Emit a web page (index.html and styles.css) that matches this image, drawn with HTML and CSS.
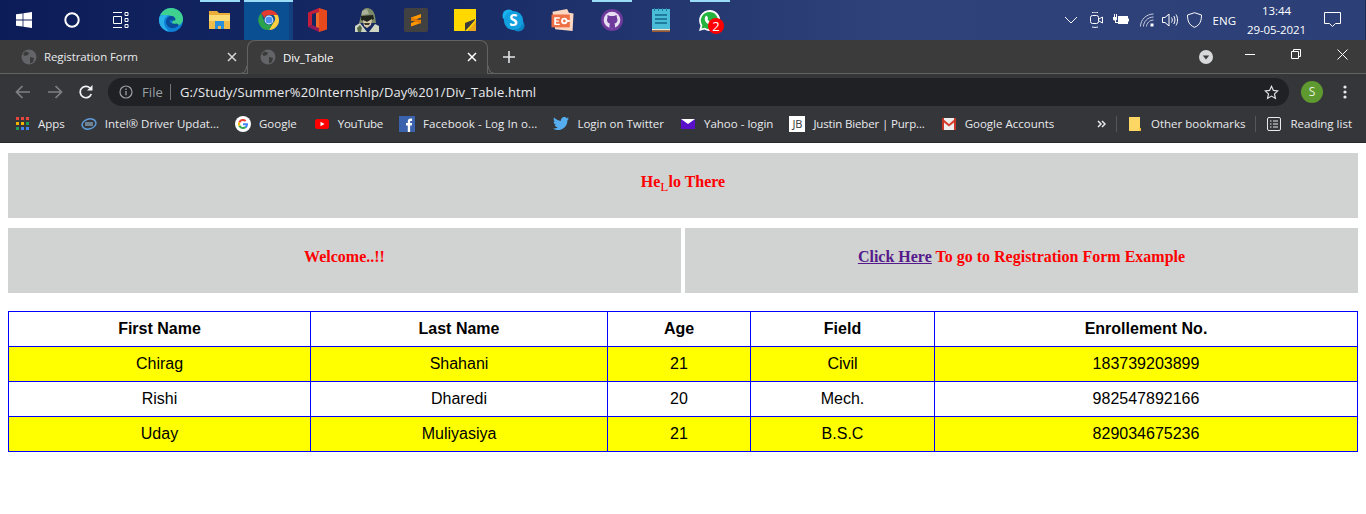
FILE: index.html
```html
<!DOCTYPE html>
<html lang="en">
  <head>
    <meta charset="UTF-8" />
    <title>Div_Table</title>
    <link rel="stylesheet" href="styles.css">
  </head>
  <body>
    <!-- Windows taskbar -->
    <div class="taskbar">
      <div class="task-start">
        <svg width="16" height="16" viewBox="0 0 16 16"><path fill="#fff" d="M0 2.300l6.600-.9v6.200H0zM7.400 1.300L16 0v7.600H7.400zM0 8.400h6.600v6.200L0 13.700zM7.400 8.400H16V16l-8.600-1.300z"/></svg>
      </div>
      <div class="task-cortana">
        <svg width="16" height="16" viewBox="0 0 16 16"><circle cx="8" cy="8" r="6.700" fill="none" stroke="#fff" stroke-width="2"/></svg>
      </div>
      <div class="task-view">
        <svg width="17" height="16" viewBox="0 0 17 16" fill="none" stroke="#fff"><path d="M1 .5h9M1 15.500h9M1.500 4.500h8v7h-8zM13 .5h3v3h-3zM13 6.500h3v3h-3zM13 12.500h3v3h-3z"/></svg>
      </div>
      <div class="task-apps">
        <div class="app">
          <svg width="24" height="24" viewBox="0 0 24 24"><circle cx="12" cy="12" r="12" fill="#0f7fd6"/><path fill="#3fd18f" d="M1 8C3 3 7 0 12 0c7 0 12 5 12 11 0 4-3 6.500-6 6.500-2.500 0-4.500-1-5-3 2-2 2-6-2-7-4-1-8-.5-10 .5z"/><path fill="#0a4c9c" d="M7 14c0-4 3-6.500 6-6 3 .5 4 3 3 4.500h-5.500c.3 2.500 3.500 4 7.500 3l2 1.500c-3 3.500-7 4-9.500 2.500C8.500 18.500 7 16.500 7 14z"/><path fill="#2ab0e8" d="M1 8c2-1 6-1.500 9-.5-2.500.5-5 3-5 7 0 3 2 6 5 9C4 22.500 0 17.500 0 12c0-1.500.4-3 1-4z"/></svg>
        </div>
        <div class="app app-running">
          <svg width="21" height="18" viewBox="0 0 21 18"><path fill="#e8ad3a" d="M0 0h8l2 2h11v16H0z"/><path fill="#fbdc74" d="M0 4h21v14H0z"/><path fill="#f0bd4a" d="M0 10h21v8H0z"/><path fill="#2a8fdc" d="M6 10h9v8h-3v-3H9v3H6z"/></svg>
        </div>
        <div class="app app-active">
          <svg width="22" height="22" viewBox="0 0 24 24"><path fill="#e33b2e" d="M12 1a11 11 0 0 1 9.500 5.500H12a5.500 5.500 0 0 0-5 3.200L3.400 4.400A11 11 0 0 1 12 1z"/><path fill="#ffcd40" d="M21.500 6.500A11 11 0 0 1 12 23l4.600-8a5.500 5.500 0 0 0 .2-8.500z"/><path fill="#2ba24c" d="M3.400 4.400L7.300 14.800A5.500 5.500 0 0 0 16.600 15L12 23A11 11 0 0 1 3.400 4.400z"/><circle cx="12" cy="12" r="4.800" fill="#fff"/><circle cx="12" cy="12" r="3.900" fill="#4a8ef0"/></svg>
        </div>
        <div class="app">
          <svg width="19" height="24" viewBox="0 0 19 24"><path fill="#e8491c" d="M11 0l8 2.500v19L11 24V0z"/><path fill="#c41e3a" d="M11 0v4L4 6v11l-4 2V4.500z"/><path fill="#8e1a5c" d="M0 19l4-2 7 3v4z"/><path fill="#f06a2a" d="M11 4v16l-3-1V5z"/></svg>
        </div>
        <div class="app">
          <svg width="24" height="24" viewBox="0 0 24 24"><path fill="#7c8a68" d="M6 8c0-5 3-8 6-8s7 2 8 8l1 7H4z"/><path fill="#aab39a" d="M7 3l5-2 2 5-7 1z"/><path fill="#1f241c" d="M6 8l12-1 1 4-7 3-6-2z"/><path fill="#d8c8a8" d="M8 12l4 2 5-3-1 6-4 3-3-2z"/><path fill="#3a3a2c" d="M9 15h6l-1 2h-4z"/><path fill="#cfd6c4" d="M0 24v-6l5-3 4 5 3 4zM24 24v-6l-4-2-3 4-3 4z"/><path fill="#55684a" d="M2 20l3-3 2 3-1 4H3z"/></svg>
        </div>
        <div class="app">
          <svg width="24" height="24" viewBox="0 0 24 24"><rect width="24" height="24" rx="2" fill="#414141"/><path fill="#ff9800" d="M7 9.500L17 6v3.500L7 13zM7 14.500L17 11v0zM7 15l10-3.500V15L7 18.500z"/><path fill="#e57a00" d="M7 9.500L17 12.500v3L7 12.500z"/></svg>
        </div>
        <div class="app">
          <svg width="22" height="22" viewBox="0 0 22 22"><path fill="#ffd800" d="M0 0h22v14l-8 8H0z"/><path fill="#eba91a" d="M22 12v10H14z"/><path fill="#3c3c3c" d="M11 22V14l10-4v1l-6 7z"/></svg>
        </div>
        <div class="app">
          <svg width="23" height="23" viewBox="0 0 24 24"><circle cx="7" cy="7" r="6.500" fill="#18b4f0"/><circle cx="17" cy="17" r="6.500" fill="#0c86c7"/><circle cx="12" cy="12" r="10" fill="#12a0e0"/><text class="skype-s" x="12" y="17.500" text-anchor="middle">S</text></svg>
        </div>
        <div class="app">
          <svg width="23" height="22" viewBox="0 0 24 24"><path fill="#fbd7c2" d="M1 3l16-3 2 4 5 1-1 19-19-2z"/><path fill="#ee7044" d="M0 6h20v14H0z"/><path fill="#fff" d="M3 9h6v1.500H5v2h3V14H5v2h4v1.500H3z"/><circle cx="14" cy="13" r="3.500" fill="#fff"/><circle cx="14" cy="13" r="1.500" fill="#ee7044"/><path fill="#fff" d="M17 12h3v2h-3z"/></svg>
        </div>
        <div class="app app-running">
          <svg width="22" height="22" viewBox="0 0 22 22"><circle cx="11" cy="11" r="11" fill="#6e3a9c"/><circle cx="11" cy="11" r="8.300" fill="#e9dff2"/><path fill="#6e3a9c" d="M6.500 6l2.500 1h4l2.500-1 .5 3c1 2 .5 5-2.500 5.500l.5 1.500V19H8.500v-3L9 14.500C6 14 5.500 11 6.500 9z"/></svg>
        </div>
        <div class="app">
          <svg width="18" height="24" viewBox="0 0 18 24"><path fill="#4bbcd8" d="M0 1h18v20H0z"/><path fill="#1e7d9c" d="M3 6h12v2H3zM3 10h12v2H3zM3 14h12v2H3zM2 0h1v3H2zM6 0h1v3H6zM10 0h1v3h-1zM14 0h1v3h-1z"/><path fill="#f3e6d0" d="M0 21h18v1.500H0z"/><path fill="#9a5a2c" d="M0 22.500h18V24H0z"/></svg>
        </div>
        <div class="app app-running">
          <svg width="21" height="21" viewBox="0 0 22 22"><path fill="#fff" d="M11 0a11 11 0 0 0-9.400 16.500L0 22l5.700-1.500A11 11 0 1 0 11 0z"/><path fill="#27b43e" d="M11 2a9 9 0 0 0-7.500 14L2.700 19.300 6 18.500A9 9 0 1 0 11 2z"/><path fill="#fff" d="M7.500 6c1-.6 1.500 1.500 2 2.500L9 10c.7 1.200 1.700 2.200 3 3l1.500-.7 2.400 1.400c0 2-2.500 2.500-4 2C8.500 15 6.200 12.300 6 9.500 6 8 6.700 6.500 7.500 6z"/></svg>
          <span class="badge">2</span>
        </div>
      </div>
      <div class="tray">
        <svg class="tray-chevron" width="14" height="8" viewBox="0 0 14 8"><path d="M1 1l6 6 6-6" fill="none" stroke="#fff"/></svg>
        <svg class="tray-meet" width="13" height="16" viewBox="0 0 13 16" fill="none" stroke="#fff"><rect x=".5" y="3.500" width="8" height="8" rx="2"/><path d="M9 7l3.500-2v6L9 9M2 .5c2-.5 4-.5 6 0M2 15c2 .5 4 .5 6 0"/></svg>
        <svg class="tray-power" width="16" height="12" viewBox="0 0 16 12"><path fill="#fff" d="M5 2h10v8H5zM15 4.500h1v3h-1zM0 3h4v2.500l-1 1H1l-1-1zM1 0h1v3H1zM3 0h1v3H3zM2 6h1v2h2v1H2z"/></svg>
        <svg class="tray-wifi" width="14" height="14" viewBox="0 0 14 14" fill="none" stroke="#c8cede"><path d="M.5 13.500C.5 7 6 1 13.500 1M3.500 13.500c0-4.500 4-9.500 10-9.500M6.500 13.500c0-3 3-6.500 7-6.500"/><rect x="10.500" y="10.500" width="3" height="3" fill="#fff" stroke="none"/></svg>
        <svg class="tray-sound" width="16" height="14" viewBox="0 0 16 14" fill="none" stroke="#fff"><path d="M.5 4.500h2.500L7 1v12L3 9.500H.5zM9.500 4.500c1 1.500 1 3.500 0 5M11.800 3c1.500 2.500 1.500 5.500 0 8M14 1.500c2 3 2 8 0 11"/></svg>
        <svg class="tray-shield" width="15" height="16" viewBox="0 0 15 16"><path d="M7.500.7l7 2.300c0 5-1 10-7 12.300C1.500 13 .5 8 .5 3z" fill="none" stroke="#fff"/></svg>
        <span class="tray-lang">ENG</span>
        <div class="clock"><span>13:44</span><span>29-05-2021</span></div>
        <svg class="tray-notify" width="17" height="16" viewBox="0 0 17 16"><path d="M.5.500h16v11h-5l-3 3-3-3h-5z" fill="none" stroke="#fff"/></svg>
      </div>
    </div>

    <!-- browser tabs -->
    <div class="tabstrip">
      <div class="tab">
        <svg class="globe" width="16" height="16" viewBox="0 0 16 16"><circle cx="8" cy="8" r="7.500" fill="#636468"/><path fill="#3b3b3b" d="M4 2.500l4 1-1 2.500-3 1-2-1.500zM9 8l4 1-1 4-3 1.500z"/></svg>
        <span class="tab-title">Registration Form</span>
        <svg class="tab-close" width="10" height="10" viewBox="0 0 10 10"><path d="M1 1l8 8M9 1L1 9" stroke="#d7d8da" stroke-width="1.500"/></svg>
      </div>
      <div class="tab tab-active">
        <svg class="globe" width="16" height="16" viewBox="0 0 16 16"><circle cx="8" cy="8" r="7.500" fill="#636468"/><path fill="#3b3b3b" d="M4 2.500l4 1-1 2.500-3 1-2-1.500zM9 8l4 1-1 4-3 1.500z"/></svg>
        <span class="tab-title">Div_Table</span>
        <svg class="tab-close" width="10" height="10" viewBox="0 0 10 10"><path d="M1 1l8 8M9 1L1 9" stroke="#fff" stroke-width="1.500"/></svg>
      </div>
      <svg class="tab-new" width="12" height="12" viewBox="0 0 12 12"><path d="M6 0v12M0 6h12" stroke="#e4e5e7" stroke-width="1.600"/></svg>
      <div class="tab-fill">
        <svg class="tab-search" width="14" height="14" viewBox="0 0 14 14"><circle cx="7" cy="7" r="7" fill="#d8d9db"/><path d="M3.800 5.500h6.400L7 9.500z" fill="#3b3b3b"/></svg>
        <svg class="win-min" width="10" height="1" viewBox="0 0 10 1"><path d="M0 .5h10" stroke="#fff"/></svg>
        <svg class="win-max" width="10" height="10" viewBox="0 0 10 10" fill="none" stroke="#fff"><path d="M.5 2.500h7v7h-7zM2.500 2.500v-2h7v7h-2"/></svg>
        <svg class="win-close" width="11" height="11" viewBox="0 0 11 11"><path d="M.5.500l10 10M10.500.500l-10 10" stroke="#fff"/></svg>
      </div>
    </div>

    <!-- address bar -->
    <div class="toolbar">
      <svg class="nav-back" width="16" height="14" viewBox="0 0 16 14" fill="none" stroke="#7e8084" stroke-width="1.700"><path d="M15 7H2M7.500 1L1.500 7l6 6"/></svg>
      <svg class="nav-forward" width="16" height="14" viewBox="0 0 16 14" fill="none" stroke="#7e8084" stroke-width="1.700"><path d="M1 7h13M8.500 1l6 6-6 6"/></svg>
      <svg class="nav-reload" width="14" height="14" viewBox="0 0 14 14" fill="none" stroke="#f1f3f4" stroke-width="1.700"><path d="M12.300 9A5.700 5.700 0 1 1 11 3"/><path d="M13.500 0v5.500H8z" fill="#f1f3f4" stroke="none"/></svg>
      <div class="omnibox">
        <svg class="info" width="14" height="14" viewBox="0 0 14 14"><circle cx="7" cy="7" r="6" fill="none" stroke="#9aa0a6" stroke-width="1.200"/><path d="M7 6v4.200M7 3.600v1.400" stroke="#9aa0a6" stroke-width="1.300"/></svg>
        <span class="scheme">File</span>
        <span class="url">G:/Study/Summer%20Internship/Day%201/Div_Table.html</span>
        <svg class="star" width="15" height="15" viewBox="0 0 15 15"><path d="M7.500 1.300l1.900 4.100 4.400.5-3.300 3 .9 4.500-3.900-2.300-3.900 2.300.9-4.500-3.300-3 4.400-.5z" fill="none" stroke="#dfe1e5" stroke-width="1.200"/></svg>
      </div>
      <span class="avatar">S</span>
      <svg class="menu" width="4" height="14" viewBox="0 0 4 14"><circle cx="2" cy="2" r="1.600" fill="#e8eaed"/><circle cx="2" cy="7" r="1.600" fill="#e8eaed"/><circle cx="2" cy="12" r="1.600" fill="#e8eaed"/></svg>
    </div>

    <!-- bookmarks -->
    <div class="bookmarks">
      <a class="bm">
        <i class="bm-icon"><svg width="13" height="13" viewBox="0 0 13 13"><path fill="#e8453c" d="M0 0h3v3H0zM5 0h3v3H5zM10 0h3v3h-3z"/><path fill="#f4b400" d="M0 5h3v3H0zM5 5h3v3H5z"/><path fill="#1a9c5a" d="M10 5h3v3h-3zM0 10h3v3H0z"/><path fill="#4285f4" d="M5 10h3v3H5zM10 10h3v3h-3z"/></svg></i>
        <span>Apps</span>
      </a>
      <a class="bm">
        <i class="bm-icon"><svg width="16" height="14" viewBox="0 0 16 14"><ellipse cx="8" cy="7" rx="7" ry="5" fill="none" stroke="#5d9cd8" stroke-width="1.500" transform="rotate(-15 8 7)"/><path d="M4 8h8M4 6h8" stroke="#a9cdec"/></svg></i>
        <span>Intel® Driver Updat...</span>
      </a>
      <a class="bm">
        <i class="bm-icon"><svg width="16" height="16" viewBox="0 0 16 16"><circle cx="8" cy="8" r="8" fill="#fff"/><path fill="#4285f4" d="M13 8.200c0-.4 0-.7-.1-1H8v2h2.800c-.1.600-.5 1.200-1 1.500l1.600 1.200c1-.9 1.600-2.200 1.600-3.700z"/><path fill="#34a853" d="M8 13c1.400 0 2.500-.4 3.400-1.200l-1.600-1.200c-.5.300-1 .5-1.800.5-1.300 0-2.400-.9-2.800-2.100l-1.700 1.300C4.300 11.900 6 13 8 13z"/><path fill="#fbbc05" d="M5.200 9c-.2-.7-.2-1.300 0-2L3.500 5.700a5 5 0 0 0 0 4.600z"/><path fill="#ea4335" d="M8 5c.8 0 1.400.3 1.900.8l1.500-1.400A5 5 0 0 0 3.500 5.700L5.200 7C5.600 5.800 6.700 5 8 5z"/></svg></i>
        <span>Google</span>
      </a>
      <a class="bm bm-youtube">
        <i class="bm-icon"><svg width="14" height="10" viewBox="0 0 14 10"><rect width="14" height="10" rx="2.500" fill="#f00"/><path d="M5.500 2.800L9.500 5l-4 2.200z" fill="#fff"/></svg></i>
        <span>YouTube</span>
      </a>
      <a class="bm bm-facebook">
        <i class="bm-icon"><svg width="16" height="16" viewBox="0 0 16 16"><rect width="16" height="16" fill="#3b62ad"/><path fill="#fff" d="M8.800 16V9.500H7V7h1.800V5.300C8.800 3.500 10 2.600 11.500 2.600h1.600V5h-1c-.8 0-1 .4-1 1V7h2l-.3 2.500h-1.700V16z"/></svg></i>
        <span>Facebook - Log In o...</span>
      </a>
      <a class="bm">
        <i class="bm-icon"><svg width="16" height="13" viewBox="0 0 16 13"><path fill="#55acee" d="M16 1.500c-.6.300-1.200.4-1.900.5.700-.4 1.200-1 1.400-1.800-.6.400-1.300.6-2 .8A3.300 3.300 0 0 0 7.900 4C5.200 3.800 2.800 2.500 1.100.6c-.9 1.500-.4 3.400 1 4.400-.5 0-1-.2-1.500-.4 0 1.600 1.100 3 2.600 3.300-.5.100-1 .1-1.500 0 .4 1.300 1.600 2.200 3.100 2.300A6.600 6.600 0 0 1 0 11.500 9.300 9.300 0 0 0 14.400 3.300c.6-.5 1.200-1.100 1.600-1.800z"/></svg></i>
        <span>Login on Twitter</span>
      </a>
      <a class="bm">
        <i class="bm-icon"><svg width="14" height="10" viewBox="0 0 14 10"><rect width="14" height="10" fill="#5a10c9"/><path d="M0 0l7 5 7-5z" fill="#fff"/></svg></i>
        <span>Yahoo - login</span>
      </a>
      <a class="bm bm-justin">
        <i class="bm-icon jb-icon">JB</i>
        <span>Justin Bieber | Purp...</span>
      </a>
      <a class="bm">
        <i class="bm-icon"><svg width="14" height="12" viewBox="0 0 14 12"><rect width="14" height="12" fill="#eee"/><path d="M0 0l7 6 7-6v3L7 8.500 0 3z" fill="#d9402f"/><path d="M0 0h2v12H0zM12 0h2v12h-2z" fill="#c33527"/></svg></i>
        <span>Google Accounts</span>
      </a>
      <div class="bm-right">
        <svg class="bm-more" width="9" height="8" viewBox="0 0 9 8" fill="none" stroke="#e8eaed" stroke-width="1.500"><path d="M1 1l3 3-3 3M5 1l3 3-3 3"/></svg>
        <i class="bm-sep"></i>
        <a class="bm">
          <i class="bm-icon"><svg width="12" height="14" viewBox="0 0 12 14"><path fill="#fdd663" d="M0 0h11v11l1 3H0z"/><path fill="#f5c33b" d="M10 11h2v3h-2z"/></svg></i>
          <span>Other bookmarks</span>
        </a>
        <i class="bm-sep"></i>
        <a class="bm">
          <i class="bm-icon"><svg width="14" height="14" viewBox="0 0 14 14" fill="none" stroke="#e8eaed"><rect x=".5" y=".5" width="13" height="13" rx="1.500"/><path d="M3 4h1.500M6 4h5M3 7h1.500M6 7h5M3 10h1.500M6 10h5"/></svg></i>
          <span>Reading list</span>
        </a>
      </div>
    </div>

    <!-- page content -->
    <div class="page">
      <div class="banner"><span>He<sub>L</sub>lo There</span></div>
      <div class="banner-row">
        <div class="banner"><span>Welcome..!!</span></div>
        <div class="banner"><span><a class="link" href="#">Click Here</a> To go to Registration Form Example</span></div>
      </div>
      <table>
        <colgroup>
          <col class="col-first" />
          <col class="col-last" />
          <col class="col-age" />
          <col class="col-field" />
          <col />
        </colgroup>
        <tr><th>First Name</th><th>Last Name</th><th>Age</th><th>Field</th><th>Enrollement No.</th></tr>
        <tr><td>Chirag</td><td>Shahani</td><td>21</td><td>Civil</td><td>183739203899</td></tr>
        <tr><td>Rishi</td><td>Dharedi</td><td>20</td><td>Mech.</td><td>982547892166</td></tr>
        <tr><td>Uday</td><td>Muliyasiya</td><td>21</td><td>B.S.C</td><td>829034675236</td></tr>
      </table>
    </div>
  </body>
</html>
```

FILE: styles.css
```css
html,
body {
  margin: 0;
  padding: 0;
  background-color: #fff;
  overflow: hidden;
}

body {
  font-family: "Open Sans", "Noto Sans", sans-serif;
}

svg {
  display: block;
  flex-shrink: 0;
}

/* taskbar */
.taskbar {
  height: 40px;
  display: flex;
  align-items: center;
  background: linear-gradient(90deg, #0b1c58 0%, #1a2c66 35%, #2f4279 65%, #2c3f76 100%);
  color: #fff;
  border-right: 1px solid #1c2a55;
  box-sizing: border-box;
}

.task-start {
  margin-left: 16px;
}

.task-cortana {
  margin-left: 32px;
}

.task-view {
  margin-left: 32px;
}

.task-apps {
  display: flex;
  margin-left: 17px;
}

.app {
  width: 49px;
  height: 40px;
  display: flex;
  align-items: center;
  justify-content: center;
  position: relative;
}

.app-running::before {
  content: "";
  position: absolute;
  top: 0;
  left: 5px;
  width: 40px;
  height: 2px;
  background-color: #98dcf7;
}

.app-active {
  background: linear-gradient(90deg, #0b4f93 0 45px, #123f80 45px);
}

.app-active::before {
  content: "";
  position: absolute;
  top: 0;
  left: 0;
  width: 100%;
  height: 2px;
  background-color: #98dcf7;
}

.skype-s {
  font-size: 16px;
  font-weight: 700;
  fill: #fff;
}

.badge {
  position: absolute;
  right: 10px;
  bottom: 6px;
  width: 16px;
  height: 16px;
  border-radius: 50%;
  background-color: #f00;
  color: #fff;
  font-size: 13px;
  line-height: 16px;
  text-align: center;
}

.tray {
  margin-left: auto;
  display: flex;
  align-items: center;
}

.tray-meet {
  margin-left: 12px;
}

.tray-power {
  margin-left: 10px;
}

.tray-wifi {
  margin-left: 11px;
}

.tray-sound {
  margin-left: 8px;
}

.tray-shield {
  margin-left: 9px;
}

.tray-lang {
  margin-left: 11px;
  font-size: 11.5px;
}

.clock {
  margin-left: 12px;
  width: 57px;
  display: flex;
  flex-direction: column;
  align-items: center;
  font-size: 11.5px;
  letter-spacing: -0.1px;
  line-height: 19px;
  white-space: nowrap;
}

.tray-notify {
  margin-left: 19px;
  margin-right: 24px;
}

/* tabs */
.tabstrip {
  height: 34px;
  display: flex;
  align-items: center;
  background-color: #3b3b3b;
  box-shadow: inset 0 -1px 0 #626262;
  color: #e8eaed;
  font-size: 11.5px;
  letter-spacing: -0.1px;
}

.tab {
  width: 247px;
  height: 34px;
  display: flex;
  align-items: center;
  box-sizing: border-box;
  padding: 0 10px 1px 21px;
  flex-shrink: 0;
}

.tab-active {
  width: 241px;
  padding-left: 12px;
  border: 1px solid #626262;
  border-bottom: 0;
  border-radius: 8px 8px 0 0;
  background-color: #3b3b3b;
  color: #fff;
  position: relative;
}

.tab-active::before,
.tab-active::after {
  content: "";
  position: absolute;
  bottom: 0;
  width: 7px;
  height: 7px;
  background-color: #3b3b3b;
  border-bottom: 1px solid #626262;
}

.tab-active::before {
  left: -9px;
  border-right: 1px solid #626262;
  border-radius: 0 0 7px 0;
}

.tab-active::after {
  right: -9px;
  border-left: 1px solid #626262;
  border-radius: 0 0 0 7px;
}

.globe {
  margin-right: 7px;
}

.tab-title {
  flex: 1;
}

.tab-new {
  margin-left: 15px;
}

.tab-fill {
  flex: 1;
  display: flex;
  align-items: center;
  height: 100%;
}

.tab-search {
  margin-left: auto;
}

.win-min {
  margin-left: 32px;
  margin-bottom: 6px;
}

.win-max {
  margin-left: 36px;
  margin-bottom: 6px;
}

.win-close {
  margin-left: 36px;
  margin-right: 18px;
  margin-bottom: 6px;
}

/* address bar */
.toolbar {
  height: 36px;
  display: flex;
  align-items: center;
  background-color: #35363a;
}

.nav-back {
  margin-left: 15px;
}

.nav-forward {
  margin-left: 16px;
}

.nav-reload {
  margin-left: 16px;
}

.omnibox {
  width: 1181px;
  margin-left: 15px;
  height: 28px;
  border-radius: 14px;
  background-color: #202124;
  display: flex;
  align-items: center;
  font-size: 13px;
  letter-spacing: 0.1px;
  box-sizing: border-box;
  padding: 0 10px 0 11px;
}

.scheme {
  margin-left: 9px;
  color: #9aa0a6;
  padding-right: 7px;
  border-right: 1px solid #72757a;
  line-height: 16px;
}

.url {
  margin-left: 9px;
  color: #e8eaed;
}

.star {
  margin-left: auto;
}

.avatar {
  margin-left: 12px;
  width: 22px;
  height: 22px;
  border-radius: 50%;
  background-color: #5e9a2f;
  color: #e8f0de;
  font-size: 12px;
  line-height: 22px;
  text-align: center;
}

.menu {
  margin-left: 20px;
}

/* bookmarks */
.bookmarks {
  height: 33px;
  box-sizing: border-box;
  border-bottom: 1px solid #2a2a2d;
  display: flex;
  align-items: center;
  gap: 16px;
  background-color: #35363a;
  color: #e8eaed;
  font-size: 11.5px;
  padding: 0 14px 5px;
  white-space: nowrap;
}

.bm {
  display: flex;
  align-items: center;
  gap: 8px;
}

.bm-youtube {
  margin-left: 1px;
  letter-spacing: -0.3px;
}

.bm-facebook {
  letter-spacing: 0.1px;
}

.bm-justin {
  letter-spacing: -0.15px;
}

.bm-icon {
  width: 16px;
  height: 16px;
  display: flex;
  align-items: center;
  justify-content: center;
  flex-shrink: 0;
}

.jb-icon {
  background-color: #fff;
  color: #333;
  font-size: 11px;
  font-style: normal;
}

.bm-right {
  margin-left: auto;
  display: flex;
  align-items: center;
  gap: 10px;
}

.bm-sep {
  width: 1px;
  height: 16px;
  background-color: #55575b;
}

/* page */
.page {
  padding: 10px 8px 0;
}

.banner {
  height: 65px;
  box-sizing: border-box;
  padding-bottom: 8px;
  background-color: #d0d3d2;
  display: flex;
  align-items: center;
  justify-content: center;
  font-family: "Liberation Serif", serif;
  font-weight: bold;
  font-size: 16px;
  color: #f00;
}

.banner sub {
  font-weight: normal;
  line-height: 0;
}

.banner-row {
  display: flex;
  gap: 4px;
  margin-top: 10px;
}

.banner-row .banner {
  flex: 1;
}

.link {
  color: #551a8b;
}

table {
  width: 100%;
  margin-top: 18px;
  border-collapse: collapse;
  table-layout: fixed;
  font-family: "Liberation Sans", Arial, sans-serif;
  font-size: 16px;
  color: #000;
}

th,
td {
  height: 35px;
  padding: 0;
  border: 1px solid #00f;
  box-sizing: border-box;
  text-align: center;
}

tr:nth-child(even) td {
  background-color: #ff0;
}

.col-first {
  width: 302px;
}

.col-last {
  width: 297px;
}

.col-age {
  width: 143px;
}

.col-field {
  width: 184px;
}
```
